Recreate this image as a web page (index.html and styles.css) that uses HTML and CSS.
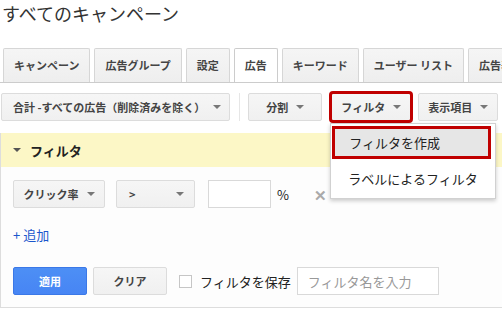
FILE: index.html
```html
<!DOCTYPE html>
<html lang="ja">
<head>
    <meta charset="UTF-8">
    <title>すべてのキャンペーン</title>
    <link rel="stylesheet" href="styles.css">
</head>
<body>
    <!-- Page title -->
    <h1 class="page-title">すべてのキャンペーン</h1>

    <!-- Tabs -->
    <div class="tabs">
        <div class="tab">キャンペーン</div>
        <div class="tab">広告グループ</div>
        <div class="tab">設定</div>
        <div class="tab active">広告</div>
        <div class="tab">キーワード</div>
        <div class="tab">ユーザー リスト</div>
        <div class="tab">広告表示オプション</div>
    </div>

    <!-- Toolbar -->
    <div class="toolbar">
        <button class="btn btn-wide">合計 -すべての広告（削除済みを除く）<span class="caret"></span></button>
        <div class="separator"></div>
        <button class="btn">分割<span class="caret"></span></button>
        <div class="menu-wrap">
            <button class="btn marked">フィルタ<span class="caret"></span></button>
            <div class="menu">
                <div class="menu-item selected">フィルタを作成</div>
                <div class="menu-item">ラベルによるフィルタ</div>
            </div>
        </div>
        <button class="btn">表示項目<span class="caret"></span></button>
    </div>

    <!-- Filter panel -->
    <div class="panel">
        <div class="panel-header">
            <span class="caret dark"></span>
            <span class="panel-title">フィルタ</span>
        </div>
        <div class="panel-body">
            <div class="filter-row">
                <button class="btn">クリック率<span class="caret"></span></button>
                <button class="btn select">&gt;<span class="caret"></span></button>
                <input type="text" class="text-input small">
                <span class="unit">%</span>
                <span class="remove">✕</span>
            </div>
            <a class="add-link">+ 追加</a>
            <div class="action-row">
                <button class="btn primary">適用</button>
                <button class="btn">クリア</button>
                <span class="checkbox"></span>
                <span class="save-label">フィルタを保存</span>
                <input type="text" class="text-input name" placeholder="フィルタ名を入力">
            </div>
        </div>
    </div>
</body>
</html>
```

FILE: styles.css
```css
* {
    margin: 0;
    padding: 0;
    box-sizing: border-box;
    font-family: "Noto Sans CJK JP", "Liberation Sans", sans-serif;
}

body {
    background-color: #fff;
    color: #222;
    width: 502px;
    height: 314px;
    overflow: hidden;
}

.page-title {
    font-size: 18px;
    font-weight: normal;
    line-height: 26px;
    color: #333;
    padding-left: 2px;
    margin-bottom: 22px;
}

/* Tabs */
.tabs {
    display: flex;
    align-items: flex-end;
    gap: 4px;
    height: 35px;
    padding-left: 3px;
    border-bottom: 1px solid #ccc;
    white-space: nowrap;
    overflow: hidden;
}

.tab {
    flex-shrink: 0;
    height: 34px;
    padding: 0 10px;
    line-height: 33px;
    font-size: 11px;
    font-weight: bold;
    color: #444;
    background: linear-gradient(#f5f5f5, #eee);
    border: 1px solid #d6d6d6;
    border-bottom: none;
    border-radius: 2px 2px 0 0;
}

.tab.active {
    height: 35px;
    margin-bottom: -1px;
    background: #fff;
    border-color: #ccc;
}

/* Toolbar */
.toolbar {
    display: flex;
    align-items: center;
    height: 28px;
    margin-top: 10px;
    padding-left: 1px;
}

.btn {
    display: inline-flex;
    align-items: center;
    justify-content: center;
    min-width: 74px;
    height: 28px;
    padding: 0 9px;
    font-size: 11px;
    font-weight: bold;
    color: #444;
    background: linear-gradient(#f6f6f6, #f0f0f0);
    border: 1px solid #dcdcdc;
    border-radius: 2px;
    white-space: nowrap;
}

.btn-wide {
    padding: 0 8px 0 11px;
}

.caret {
    display: inline-block;
    width: 0;
    height: 0;
    margin-left: 8px;
    border-left: 4px solid transparent;
    border-right: 4px solid transparent;
    border-top: 4px solid #777;
}

.caret.dark {
    margin-left: 0;
    border-top-color: #555;
}

.separator {
    width: 1px;
    height: 28px;
    margin: 0 8px 0 9px;
    background-color: #e6e6e6;
}

.toolbar .btn + .menu-wrap {
    margin-left: 9px;
}

.menu-wrap + .btn {
    margin-left: 7px;
}

.menu-wrap {
    position: relative;
}

.marked {
    outline: 3px solid #c00000;
    outline-offset: -1px;
}

.menu {
    position: absolute;
    top: 30px;
    left: -1px;
    width: 166px;
    padding: 2px 0 3px;
    background-color: #fff;
    border: 1px solid rgba(0, 0, 0, 0.18);
    box-shadow: 0 2px 4px rgba(0, 0, 0, 0.2);
    z-index: 10;
}

.menu-item {
    height: 33px;
    line-height: 33px;
    padding-left: 17px;
    font-size: 13px;
    color: #222;
    white-space: nowrap;
}

.menu-item.selected {
    margin: 0 4px 3px 1px;
    padding-left: 14px;
    line-height: 27px;
    background-color: #e6e6e6;
    border: 3px solid #c00000;
}

/* Filter panel */
.panel {
    margin-top: 12px;
    border-left: 1px solid #ddd;
    border-bottom: 1px solid #ddd;
}

.panel-header {
    display: flex;
    align-items: center;
    gap: 9px;
    height: 34px;
    padding-left: 12px;
    background-color: #fcf7c6;
}

.panel-title {
    font-size: 13px;
    font-weight: bold;
    color: #222;
}

.panel-body {
    height: 140px;
    padding: 13px 0 0 12px;
    background-color: #fdfdfd;
}

.filter-row {
    display: flex;
    align-items: center;
    height: 28px;
}

.filter-row .btn {
    min-width: 92px;
    margin-right: 11px;
}

.filter-row .btn.select {
    width: 79px;
    min-width: 79px;
    justify-content: space-between;
    padding: 0 10px 0 12px;
    margin-right: 13px;
}

.text-input {
    height: 28px;
    border: 1px solid #d9d9d9;
    background-color: #fff;
    font-size: 13px;
    color: #222;
    outline: none;
}

.text-input.small {
    width: 63px;
}

.unit {
    margin-left: 6px;
    font-size: 13px;
}

.remove {
    margin-left: 25px;
    font-size: 15px;
    font-weight: bold;
    color: #aaa;
}

.add-link {
    display: block;
    margin-top: 17px;
    font-size: 13px;
    line-height: 20px;
    color: #1a56cc;
}

.action-row {
    display: flex;
    align-items: center;
    height: 30px;
    margin-top: 21px;
}

.btn.primary {
    color: #fff;
    background: linear-gradient(#4d8ff5, #4785f4);
    border-color: #3b78e7;
    margin-right: 6px;
}

.checkbox {
    width: 13px;
    height: 13px;
    margin: 0 8px 0 12px;
    border: 1px solid #c6c6c6;
    background-color: #fff;
}

.save-label {
    font-size: 13px;
    color: #222;
    margin-right: 6px;
}

.text-input.name {
    width: 142px;
    padding-left: 10px;
}

.text-input.name::placeholder {
    color: #999;
}
```
